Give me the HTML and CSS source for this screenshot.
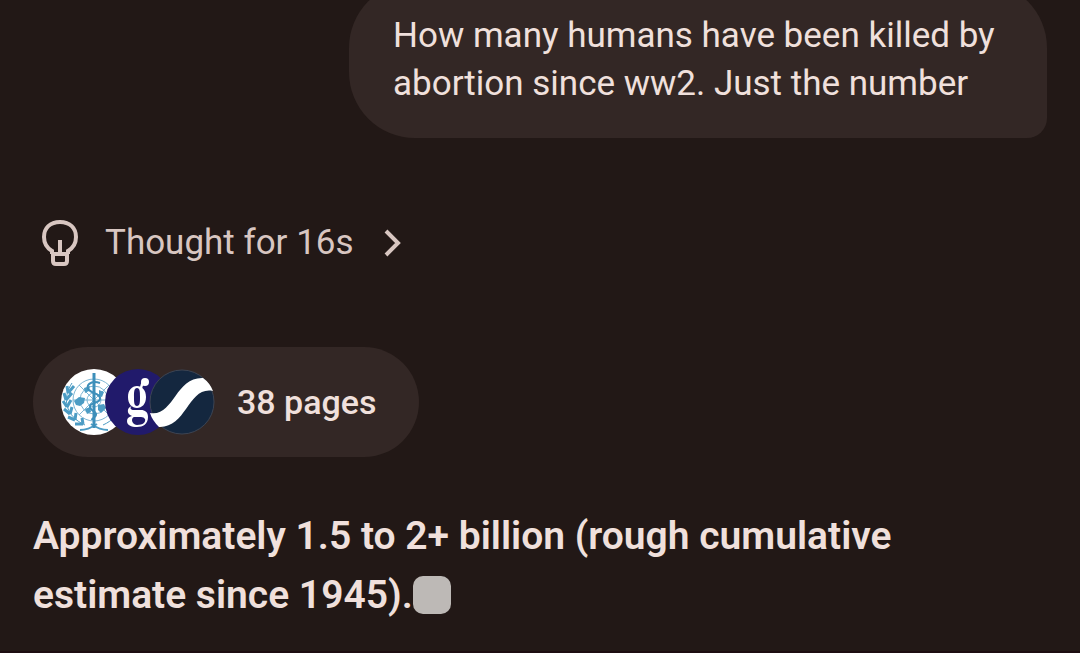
FILE: index.html
```html
<!DOCTYPE html>
<html lang="en">

<head>
  <meta charset="UTF-8" />
  <meta name="viewport" content="width=device-width, initial-scale=1.0" />
  <title>Chat</title>
  <link rel="stylesheet" href="styles.css">
</head>

<body>
  <main class="chat">
    <div class="question">How many humans have been killed by abortion since ww2. Just the number</div>

    <button class="thought" type="button">
      <svg class="bulb" width="38" height="48" viewBox="0 0 38 48" fill="none" stroke="currentColor" stroke-width="4">
        <path d="M11 35V32C6 29 3 24 3 18C3 9 9 3 19 3S35 9 35 18C35 24 32 29 27 32V35" />
        <path d="M12 35H26V42Q26 45 23 45H15Q12 45 12 42Z" />
        <path d="M19 21V34" />
      </svg>
      <span>Thought for 16s</span>
      <svg class="chevron" width="18" height="28" viewBox="0 0 18 28" fill="none" stroke="currentColor" stroke-width="4">
        <path d="M2 2L14 14L2 26" />
      </svg>
    </button>

    <button class="sources" type="button">
      <span class="icons">
        <svg class="icon" viewBox="0 0 66 66">
          <circle cx="33" cy="33" r="33" fill="#fff" />
          <!-- globe grid -->
          <g fill="none" stroke="#7db6d3" stroke-width="1">
            <circle cx="33" cy="31" r="21" />
            <circle cx="33" cy="31" r="14" />
            <circle cx="33" cy="31" r="7" />
            <path d="M12 31H54M18 16L48 46M48 16L18 46" />
          </g>
          <!-- continents -->
          <g fill="#4c9cc4">
            <path d="M13 32L18 28L24 29L23 34L19 37L15 36ZM23 19L29 17L28 22L24 24ZM37 36L43 35L45 39L40 44L37 41ZM24 40L29 38L30 43L26 45ZM38 21L43 23L41 28L38 27Z" />
          </g>
          <!-- laurel -->
          <g fill="none" stroke="#4c9cc4" stroke-width="2">
            <path d="M11 14C1 29 4 47 24 56M55 14C65 29 62 47 42 56" stroke-width="1" />
            <path d="M7 24L6 17M7 24L13 17M5 31L3 24M5 31L11 24M6 38L2 32M6 38L10 31M9 45L3 40M9 45L11 38M14 51L7 48M14 51L15 44M22 55L14 55M22 55L21 49" stroke-width="3" />
            <path d="M19 61Q27 61 36 55M47 61Q39 61 30 55" />
          </g>
          <path d="M33 4V59" stroke="#3d8fba" stroke-width="3" />
          <path d="M39 14C29 11 24 17 28 21S40 25 39 30S28 33 29 38S36 42 35 46S31 48 31 51" fill="none" stroke="#3d8fba" stroke-width="2" />
        </svg>
        <svg class="icon" viewBox="0 0 66 66">
          <circle cx="33" cy="33" r="33" fill="#211a6b" />
          <!-- two-bowl g mark -->
          <g fill="#fff" fill-rule="evenodd">
            <path d="M32 17C37 17 41 21 41 28S37 39 32 39S23 35 23 28S27 17 32 17ZM32 19C29 19 29 23 29 28S29 37 32 37S35 33 35 28S35 19 32 19Z" />
            <path d="M27 37C24 39 26 41 29 41H36C40 41 43 43 43 48C43 55 38 58 32 58S22 56 22 52C22 49 24 48 27 47C21 45 22 38 27 37ZM29 48C26 49 26 55 32 56C38 56 41 53 40 50Q39 48 36 48Z" />
            <path d="M35 18Q36 12 40 10L41 14Q38 14 37 20Z" />
            <circle cx="40" cy="13" r="4" />
          </g>
        </svg>
        <svg class="icon" viewBox="0 0 66 66">
          <circle cx="33" cy="33" r="32" fill="#14273f" stroke="#3c4453" />
          <path d="M1 44C25 48 26 8 54 9Q61 14 64 22C39 17 38 59 10 58Q3 51 1 44Z" fill="#fff" />
        </svg>
      </span>
      <span>38 pages</span>
    </button>

    <p class="answer">Approximately 1.5 to 2+ billion (rough cumulative estimate since 1945).<span class="cursor"></span></p>
  </main>
</body>

</html>
```
FILE: styles.css
```css
body {
  margin: 0;
  background-color: #221816;
  color: #f0e0dc;
  font-family: Roboto, "Liberation Sans", sans-serif;
  font-size: 35px;
}

.chat {
  display: flex;
  flex-direction: column;
  align-items: flex-start;
  box-sizing: border-box;
  min-height: 100vh;
  padding: 0 33px;
  border-bottom: 2px solid #1d0d11;
  overflow: hidden;
}

/* the top of the bubble is scrolled out of view */
.question {
  align-self: flex-end;
  box-sizing: border-box;
  max-width: 698px;
  margin-top: -18px;
  padding: 30px 40px 30px 44px;
  border-radius: 66px 66px 20px 66px;
  background-color: #332725;
  line-height: 48px;
}

button {
  display: flex;
  align-items: center;
  border: none;
  background: none;
  color: inherit;
  font: inherit;
  cursor: pointer;
}

.thought {
  margin-top: 81px;
  padding: 0 8px;
  color: #d8c6c1;
  line-height: 48px;
}

.bulb {
  margin-right: 26px;
}

.chevron {
  margin-left: 30px;
}

.sources {
  gap: 22px;
  height: 110px;
  margin-top: 80px;
  padding: 0 42px 0 28px;
  border-radius: 55px;
  background-color: #332725;
  font-size: 34px;
  font-weight: 500;
}

.icons {
  display: flex;
}

.icon {
  width: 66px;
  height: 66px;
}

.icon + .icon {
  margin-left: -22px;
}

.answer {
  max-width: 940px;
  margin: 50px 0 0;
  font-size: 39px;
  font-weight: 600;
  line-height: 59px;
}

.cursor {
  display: inline-block;
  width: 38px;
  height: 38px;
  border-radius: 10px;
  background-color: #bdb9b6;
  vertical-align: -6px;
}
```
